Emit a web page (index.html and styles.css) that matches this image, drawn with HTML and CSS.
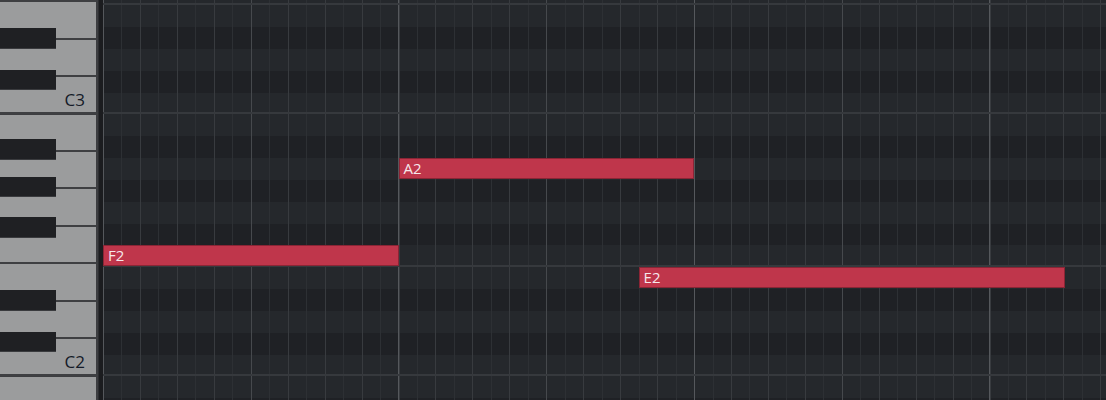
FILE: index.html
```html
<!DOCTYPE html>
<html>
<head>
<meta charset="utf-8">
<title>Piano Roll</title>
<link rel="stylesheet" href="styles.css">
</head>
<body>
<div class="roll">
  <div class="keyboard">
    <div class="keys">
      <div class="octave">
        <div class="wk"></div><div class="wk"></div><div class="wk"></div><div class="wk"></div><div class="wk"></div><div class="wk"></div>
        <div class="wk c"><span class="label">C3</span></div>
        <div class="bk as"></div><div class="bk gs"></div><div class="bk fs"></div><div class="bk ds"></div><div class="bk cs"></div>
      </div>
      <div class="octave">
        <div class="wk"></div><div class="wk"></div><div class="wk"></div><div class="wk"></div><div class="wk"></div><div class="wk"></div>
        <div class="wk c"><span class="label">C2</span></div>
        <div class="bk as"></div><div class="bk gs"></div><div class="bk fs"></div><div class="bk ds"></div><div class="bk cs"></div>
      </div>
      <div class="octave">
        <div class="wk"></div><div class="wk"></div><div class="wk"></div><div class="wk"></div><div class="wk"></div><div class="wk"></div>
        <div class="wk c"></div>
        <div class="bk as"></div><div class="bk gs"></div><div class="bk fs"></div><div class="bk ds"></div><div class="bk cs"></div>
      </div>
    </div>
  </div>
  <div class="sep"></div>
  <div class="grid">
    <div class="rows">
      <div class="row w edge"></div>
      <div class="row w"></div>
      <div class="row b"></div>
      <div class="row w"></div>
      <div class="row b"></div>
      <div class="row w edge"></div>
      <div class="row w"></div>
      <div class="row b"></div>
      <div class="row w"></div>
      <div class="row b"></div>
      <div class="row w"></div>
      <div class="row b"></div>
      <div class="row w edge"></div>
      <div class="row w"></div>
      <div class="row b"></div>
      <div class="row w"></div>
      <div class="row b"></div>
      <div class="row w edge"></div>
      <div class="row w"></div>
      <div class="row b"></div>
    </div>
    <div class="note" style="left:0px;top:245px;width:295.5px">F2</div>
    <div class="note" style="left:295.5px;top:157.8px;width:295.5px">A2</div>
    <div class="note" style="left:535.6px;top:266.8px;width:426.4px">E2</div>
  </div>
</div>
</body>
</html>
```
FILE: styles.css
```css
html, body {
  margin: 0;
  padding: 0;
}
body {
  width: 1106px;
  height: 400px;
  overflow: hidden;
  background: #1f2125;
  font-family: "Open Sans", "Noto Sans", sans-serif;
}
.roll {
  display: flex;
  height: 400px;
  overflow: hidden;
}
.keyboard {
  width: 97px;
  flex: none;
  overflow: hidden;
  background: #3c3d40;
}
.keys {
  margin-top: -147.5px;
  display: flex;
  flex-direction: column;
}
.octave {
  position: relative;
  display: flex;
  flex-direction: column;
  height: 262px;
}
.wk {
  box-sizing: border-box;
  height: 37.43px;
  width: 96px;
  background: #9b9c9d;
  border-bottom: 2px solid #3e3f42;
  display: flex;
  align-items: flex-end;
  justify-content: flex-end;
}
.label {
  font-size: 17px;
  line-height: 1;
  color: #141a28;
  padding: 0 11px 4px 0;
}
.bk {
  position: absolute;
  left: 0;
  width: 56px;
  height: 20.5px;
  box-sizing: border-box;
  background: #1f2023;
  border-bottom: 1px solid #3a3b3e;
}
.bk.as { top: 24.5px; }
.bk.gs { top: 62px; }
.bk.fs { top: 102.5px; }
.bk.ds { top: 175.5px; }
.bk.cs { top: 217px; }
.sep {
  width: 6px;
  flex: none;
  background: linear-gradient(to right, #3d3e41 0 1px, #2c2d30 1px 2px, #1b1c1f 2px);
}
.grid {
  position: relative;
  flex: 1;
  overflow: hidden;
}
.rows {
  margin-top: -16.5px;
  display: flex;
  flex-direction: column;
}
.row {
  height: 21.833px;
  flex: none;
  background-image:
    repeating-linear-gradient(90deg, #55585c 0 1px, transparent 1px 295.5px),
    repeating-linear-gradient(90deg, #46494d 0 1px, transparent 1px 147.75px),
    repeating-linear-gradient(90deg, #383b3f 0 1px, transparent 1px 36.94px),
    repeating-linear-gradient(90deg, #2d3034 0 1px, transparent 1px 18.47px);
}
.row.w { background-color: #25282c; }
.row.b { background-color: #1f2125; }
.row.edge {
  background-image:
    linear-gradient(to top, #36393d 0 2px, transparent 2px),
    repeating-linear-gradient(90deg, #55585c 0 1px, transparent 1px 295.5px),
    repeating-linear-gradient(90deg, #46494d 0 1px, transparent 1px 147.75px),
    repeating-linear-gradient(90deg, #383b3f 0 1px, transparent 1px 36.94px),
    repeating-linear-gradient(90deg, #2d3034 0 1px, transparent 1px 18.47px);
}
.note {
  position: absolute;
  box-sizing: border-box;
  height: 21px;
  background: #bf364b;
  border: 1px solid #8a2535;
  color: #f6e8eb;
  font-size: 15px;
  line-height: 19px;
  padding-left: 4px;
}
```
